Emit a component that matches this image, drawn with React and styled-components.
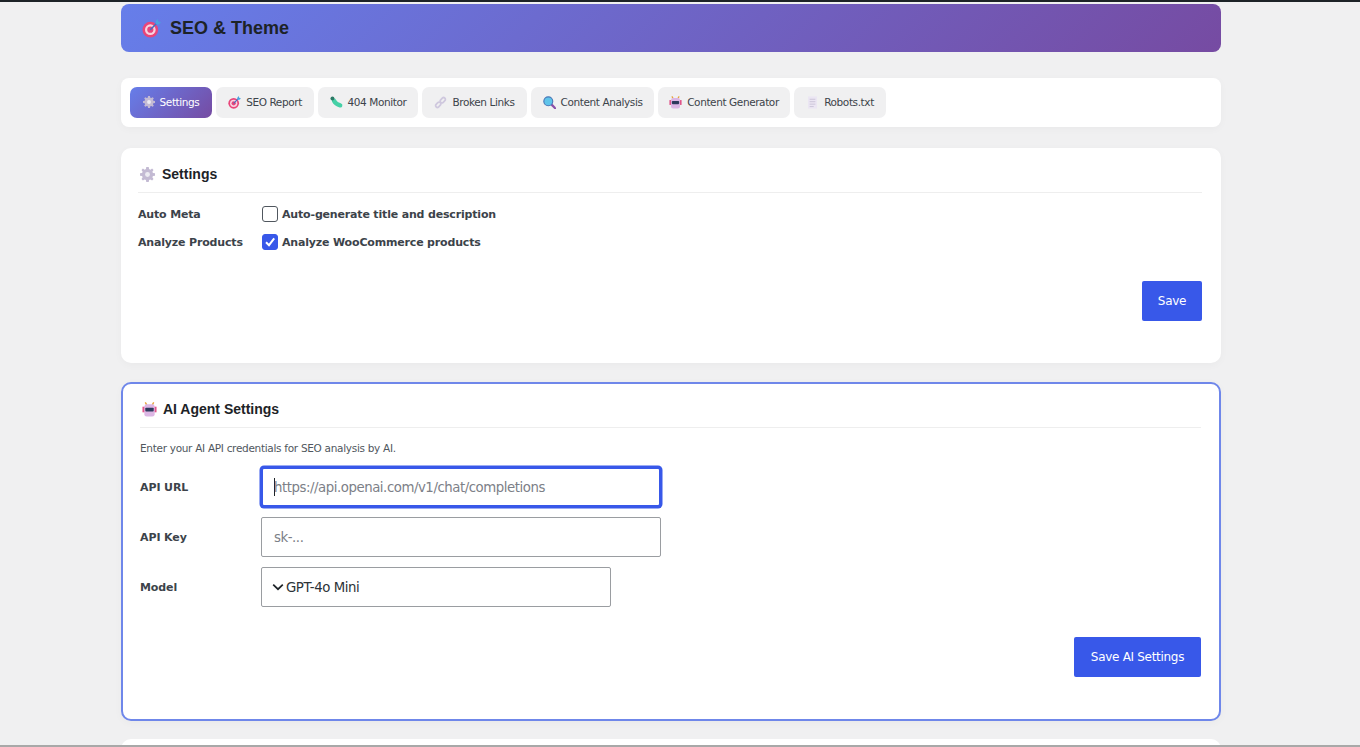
import React from 'react'
import styled, { createGlobalStyle } from 'styled-components'

const GlobalStyle = createGlobalStyle`
  html, body {
    margin: 0;
    padding: 0;
    background: #f0f0f1;
    overflow: hidden;
  }
  body {
    height: 747px;
    font-family: "DejaVu Sans", sans-serif;
    color: #1d2327;
  }
`

const TopStripe = styled.div`
  height: 2px;
  background: #1d2327;
`

const BottomStripe = styled.div`
  position: fixed;
  left: 0;
  right: 0;
  bottom: 0;
  height: 2px;
  background: #a8a8a8;
`

const Page = styled.div`
  width: 1100px;
  margin-left: 121px;
  padding-top: 2px;
  display: flex;
  flex-direction: column;
`

const Header = styled.header`
  height: 48px;
  border-radius: 8px;
  background: linear-gradient(135deg, #667eea 0%, #764ba2 100%);
  display: flex;
  align-items: center;
  gap: 9px;
  padding-left: 21px;
  margin-bottom: 26px;
`

const HeaderTitle = styled.h1`
  margin: 0;
  font: 700 18px "Liberation Sans", Arial, sans-serif;
  color: #1d2327;
`

const TabBar = styled.nav`
  background: #fff;
  border-radius: 8px;
  height: 49px;
  box-sizing: border-box;
  padding: 9px;
  display: flex;
  gap: 4px;
  margin-bottom: 21px;
  box-shadow: 0 2px 8px rgba(0, 0, 0, 0.03);
`

const Tab = styled.button`
  border: 0;
  height: 31px;
  width: ${p => p.$w}px;
  padding: 0 0 1px;
  border-radius: 7px;
  display: flex;
  align-items: center;
  justify-content: center;
  gap: 5px;
  font: 400 10.5px "DejaVu Sans", sans-serif;
  letter-spacing: -0.4px;
  color: ${p => (p.$active ? '#fff' : '#3c434a')};
  background: ${p => (p.$active ? 'linear-gradient(135deg, #667eea 0%, #764ba2 100%)' : '#f0f0f1')};
`

const Card = styled.section`
  background: #fff;
  border-radius: 10px;
  box-sizing: border-box;
  height: ${p => p.$h}px;
  padding: ${p => (p.$accent ? '16px 18px 0 17px' : '17px 19px 0 17px')};
  border: ${p => (p.$accent ? '2px solid #6f87ea' : '0')};
  margin-bottom: ${p => (p.$accent ? 18 : 19)}px;
  display: flex;
  flex-direction: column;
  box-shadow: 0 2px 8px rgba(0, 0, 0, 0.03);
`

const CardTitle = styled.h2`
  margin: 0;
  height: 27px;
  padding-left: 2px;
  border-bottom: 1px solid #eeeeee;
  display: flex;
  align-items: flex-start;
  gap: ${p => p.$gap}px;
  font: 700 14px/19px "Liberation Sans", Arial, sans-serif;
  color: #1d2327;

  svg {
    margin-top: 2px;
  }
`

const CheckRow = styled.div`
  display: flex;
  align-items: center;
  height: 28px;
  font: 700 11px "DejaVu Sans", sans-serif;
  letter-spacing: -0.17px;
  color: #3c434a;
`

const RowLabel = styled.span`
  width: 124px;
`

const CheckBox = styled.span`
  width: 16px;
  height: 16px;
  box-sizing: border-box;
  border-radius: 3px;
  margin-right: 4px;
  border: 1px solid ${p => (p.$on ? '#3858e9' : '#50575e')};
  background: ${p => (p.$on ? '#3858e9' : '#fff')};
  display: flex;
  align-items: center;
  justify-content: center;
`

const Settings = styled.div`
  padding-top: 7px;
`

const ButtonRow = styled.div`
  display: flex;
  justify-content: flex-end;
  margin-top: ${p => p.$top}px;
`

const SaveButton = styled.button`
  height: 40px;
  width: ${p => p.$w}px;
  border: 0;
  border-radius: 2px;
  padding: 0;
  background: #3858e9;
  color: #fff;
  font: 400 12px "DejaVu Sans", sans-serif;
  letter-spacing: -0.3px;
`

const Hint = styled.p`
  margin: 13px 0 12px;
  font: 400 10.5px/14px "DejaVu Sans", sans-serif;
  letter-spacing: -0.3px;
  color: #50575e;
`

const FieldRow = styled.div`
  display: flex;
  align-items: center;
  height: 40px;
  margin-bottom: 10px;
`

const FieldLabel = styled.label`
  width: 121px;
  font: 700 11px "DejaVu Sans", sans-serif;
  letter-spacing: -0.1px;
  color: #3c434a;
`

const FieldBox = styled.div`
  box-sizing: border-box;
  height: 40px;
  width: ${p => p.$w}px;
  border-radius: 2px;
  background: #fff;
  border: 1px solid #9a9da1;
  padding: 0 12px;
  display: flex;
  align-items: center;
  font: 400 13.3px "DejaVu Sans", sans-serif;
  letter-spacing: -0.45px;
  color: ${p => (p.$value ? '#2c3338' : '#7c8087')};
  ${p => p.$focus && `
    border: 2px solid #3858e9;
    border-radius: 3px;
    padding: 0 11px;
    box-shadow: 0 0 0 1.5px #3858e9;
  `}
`

const Caret = styled.span`
  width: 1px;
  height: 18px;
  background: #1d2327;
  margin-right: -1px;
`

const SelectBox = styled(FieldBox)`
  padding: 0 0 0 10px;
  gap: 2px;
`

const Peek = styled.div`
  background: #fff;
  border-radius: 10px 10px 0 0;
  height: 20px;
`

function Target({ size = 16 }) {
  return (
    <svg width={size} height={size} viewBox="0 0 16 16">
      <circle cx="7" cy="9" r="6.6" fill="#e8457a" />
      <circle cx="7" cy="9" r="4.5" fill="#f7d3df" />
      <circle cx="7" cy="9" r="2.6" fill="#e8457a" />
      <path d="M7 9 13 3" stroke="#3f6fc4" strokeWidth="1.3" />
      <path d="M11.5 2 13 0l.8 2.2L16 3l-2 1.6L11.5 4.500z" fill="#4aa3e0" />
    </svg>
  )
}

function Gear({ size = 12 }) {
  return (
    <svg width={size} height={size} viewBox="0 0 16 16">
      <path fill="#c3bad3" d="M6.7 0h2.6l.4 2.2 1.3.6L12.900 1.600 14.400 3.100l-1.200 1.900.6 1.300 2.200.4v2.600l-2.200.4-.6 1.300 1.200 1.900-1.500 1.500-1.900-1.200-1.300.6-.4 2.200H6.700l-.4-2.200-1.300-.6-1.900 1.200-1.500-1.500 1.200-1.900-.6-1.300L0 9.300V6.700l2.200-.4.6-1.300-1.200-1.900 1.500-1.500L5 2.800l1.300-.6z" />
      <circle cx="8" cy="8" r="2.6" fill="#ecebf2" />
    </svg>
  )
}

function Bug() {
  return (
    <svg width="13" height="13" viewBox="0 0 16 16">
      <path d="M5 6c1.500 3 3.500 4.500 7.500 5.500" fill="none" stroke="#45d0a6" strokeWidth="5.500" strokeLinecap="round" />
      <circle cx="3" cy="3" r="2.400" fill="#2c7a66" />
    </svg>
  )
}

function ChainLink() {
  return (
    <svg width="13" height="13" viewBox="0 0 16 16" fill="none" stroke="#cfc8de" strokeWidth="2.200">
      <rect x="-3.600" y="-2.200" width="7.200" height="4.400" rx="2.200" transform="translate(5.200 10.800) rotate(-45)" />
      <rect x="-3.600" y="-2.200" width="7.200" height="4.400" rx="2.200" transform="translate(10.800 5.200) rotate(-45)" />
    </svg>
  )
}

function Magnifier() {
  return (
    <svg width="13" height="13" viewBox="0 0 16 16">
      <path d="M10 10l5 5" stroke="#8a4fa8" strokeWidth="2.800" strokeLinecap="round" />
      <circle cx="6.500" cy="6.500" r="5.500" fill="#5fc4ea" stroke="#4a78b8" strokeWidth="1.400" />
    </svg>
  )
}

function Robot({ size = 13 }) {
  return (
    <svg width={size} height={size} viewBox="0 0 16 16">
      <path d="M5 3 3.500 0.500M11 3l1.500-2.500" stroke="#e8a33c" strokeWidth="1.500" />
      <rect x="0.500" y="5" width="2.500" height="6" fill="#e0558a" />
      <rect x="13" y="5" width="2.500" height="6" fill="#e0558a" />
      <rect x="2.500" y="2.500" width="11" height="13" rx="2.500" fill="#dcb6e4" />
      <rect x="3.500" y="6" width="9" height="4" rx="1" fill="#2d3a5c" />
    </svg>
  )
}

function Doc() {
  return (
    <svg width="13" height="13" viewBox="0 0 16 16">
      <rect x="2.500" y="0.500" width="11" height="15" fill="#ebe6f3" />
      <path d="M4.500 4h7M4.500 7h7M4.500 10h7M4.500 13h5" stroke="#c6bfd4" strokeWidth="1" />
    </svg>
  )
}

function Tick() {
  return (
    <svg width="14" height="14" viewBox="0 0 14 14" fill="none" stroke="#fff" strokeWidth="2">
      <path d="M3 7.200 6 10.200 11.200 3.400" />
    </svg>
  )
}

function Chevron() {
  return (
    <svg width="12" height="8" viewBox="0 0 12 8" fill="none" stroke="#1d2327" strokeWidth="1.700">
      <path d="M1.200 1.600 6 6.200l4.800-4.600" />
    </svg>
  )
}

const tabs = [
  { label: 'Settings', icon: <Gear />, w: 82, active: true },
  { label: 'SEO Report', icon: <Target size={13} />, w: 98 },
  { label: '404 Monitor', icon: <Bug />, w: 100 },
  { label: 'Broken Links', icon: <ChainLink />, w: 105 },
  { label: 'Content Analysis', icon: <Magnifier />, w: 123 },
  { label: 'Content Generator', icon: <Robot />, w: 132 },
  { label: 'Robots.txt', icon: <Doc />, w: 92 },
]

export default function App() {
  return (
    <>
      <GlobalStyle />
      <TopStripe />
      <Page>
        <Header>
          <Target size={19} />
          <HeaderTitle>SEO &amp; Theme</HeaderTitle>
        </Header>

        <TabBar>
          {tabs.map(t => (
            <Tab key={t.label} $w={t.w} $active={t.active}>
              {t.icon}
              {t.label}
            </Tab>
          ))}
        </TabBar>

        <Card $h={215}>
          <CardTitle $gap={7}>
            <Gear size={15} />
            Settings
          </CardTitle>
          <Settings>
            <CheckRow>
              <RowLabel>Auto Meta</RowLabel>
              <CheckBox />
              Auto-generate title and description
            </CheckRow>
            <CheckRow>
              <RowLabel>Analyze Products</RowLabel>
              <CheckBox $on>
                <Tick />
              </CheckBox>
              Analyze WooCommerce products
            </CheckRow>
          </Settings>
          <ButtonRow $top={25}>
            <SaveButton $w={60}>Save</SaveButton>
          </ButtonRow>
        </Card>

        <Card $h={339} $accent>
          <CardTitle $gap={6}>
            <Robot size={15} />
            AI Agent Settings
          </CardTitle>
          <Hint>Enter your AI API credentials for SEO analysis by AI.</Hint>
          <FieldRow>
            <FieldLabel>API URL</FieldLabel>
            <FieldBox $w={400} $focus>
              <Caret />
              https://api.openai.com/v1/chat/completions
            </FieldBox>
          </FieldRow>
          <FieldRow>
            <FieldLabel>API Key</FieldLabel>
            <FieldBox $w={400}>sk-...</FieldBox>
          </FieldRow>
          <FieldRow>
            <FieldLabel>Model</FieldLabel>
            <SelectBox $w={350} $value>
              <Chevron />
              GPT-4o Mini
            </SelectBox>
          </FieldRow>
          <ButtonRow $top={20}>
            <SaveButton $w={127}>Save AI Settings</SaveButton>
          </ButtonRow>
        </Card>

        <Peek />
      </Page>
      <BottomStripe />
    </>
  )
}
